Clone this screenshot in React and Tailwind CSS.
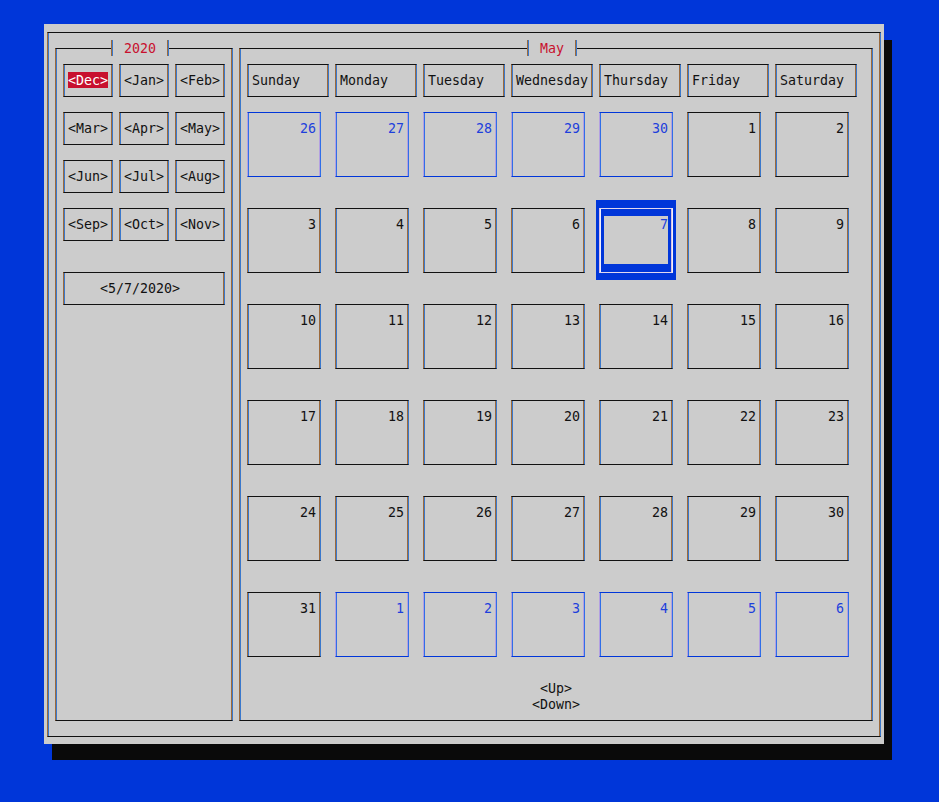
import React from "react";

const BOX =
  "border-y border-y-[#111111] border-l border-l-[#9c6a3c] border-r border-r-[#3a78cc] shadow-[inset_1px_0_0_#3a78cc,inset_-1px_0_0_#9c6a3c]";
const BLUEBOX =
  "border-y border-y-[#0036d9] border-l border-l-[#b4a0e0] border-r border-r-[#2f6ee8] shadow-[inset_1px_0_0_#2f6ee8,inset_-1px_0_0_#b4a0e0]";
const SELBOX =
  "border-y border-y-[#e2d8ee] border-l border-l-[#d8c0e4] border-r border-r-[#f2f0fa] bg-[#0036d9] shadow-[0_-5px_0_3px_#0036d9,0_4px_0_3px_#0036d9,inset_1px_0_0_#f2f0fa,inset_-1px_0_0_#d8c0e4]";
const TITLE =
  "absolute top-[-9px] h-[16px] pt-[1px] bg-[#cccccc] border-l border-l-[#9c6a3c] border-r border-r-[#3a78cc] shadow-[inset_1px_0_0_#3a78cc,inset_-1px_0_0_#9c6a3c] text-center text-[#c8102e]";

const months = ["Dec", "Jan", "Feb", "Mar", "Apr", "May", "Jun", "Jul", "Aug", "Sep", "Oct", "Nov"];
const days = ["Sunday", "Monday", "Tuesday", "Wednesday", "Thursday", "Friday", "Saturday"];

const cells = [];
[26, 27, 28, 29, 30].forEach((d) => cells.push({ d, other: true }));
for (let d = 1; d <= 31; d++) cells.push({ d, other: false });
[1, 2, 3, 4, 5, 6].forEach((d) => cells.push({ d, other: true }));

function Cell({ d, other }) {
  if (!other && d === 7) {
    return (
      <div className={`w-[74px] h-[65px] px-[4px] pt-[7px] ${SELBOX}`}>
        <div className="w-[64px] h-[48px] pt-[1px] bg-[#cccccc] text-right text-[#1d3fdc]">{d}</div>
      </div>
    );
  }
  return (
    <div
      className={`w-[74px] h-[65px] pt-[8px] pr-[4px] text-right ${
        other ? `${BLUEBOX} text-[#1d3fdc]` : BOX
      }`}
    >
      {d}
    </div>
  );
}

export default function App() {
  return (
    <div className="w-[939px] h-[802px] bg-[#0036d9] pl-[44px] pt-[24px] font-['DejaVu_Sans_Mono',monospace] text-[13.3px] leading-[16px] text-[#111111]">
      <div className="w-[840px] h-[720px] bg-[#cccccc] shadow-[8px_16px_0_0_#0a0a0a] pl-[3px] pt-[8px]">
        <div className={`w-[834px] h-[705px] pl-[7px] pt-[15px] flex gap-[6px] ${BOX}`}>
          {/* Left panel */}
          <div className={`relative w-[178px] h-[673px] pl-[7px] pt-[15px] ${BOX}`}>
            <div className={`${TITLE} left-[55px] w-[58px]`}>2020</div>
            <div className="grid grid-cols-[50px_50px_50px] gap-x-[6px] gap-y-[15px]">
              {months.map((m, i) => (
                <div key={m} className={`w-[50px] h-[33px] pt-[7px] flex justify-center ${BOX}`}>
                  {i === 0 ? (
                    <span className="block h-[16px] pt-[1px] leading-[16px] bg-[#c8102e] text-white">{`<${m}>`}</span>
                  ) : (
                    <span className="block h-[16px] pt-[1px] leading-[16px]">{`<${m}>`}</span>
                  )}
                </div>
              ))}
            </div>
            <div className={`mt-[31px] w-[162px] h-[33px] pt-[8px] pl-[36px] ${BOX}`}>&lt;5/7/2020&gt;</div>
          </div>

          {/* Right panel */}
          <div className={`relative w-[634px] h-[673px] pl-[7px] pt-[15px] ${BOX}`}>
            <div className={`${TITLE} left-[287px] w-[50px]`}>May</div>
            <div className="flex gap-[6px]">
              {days.map((d) => (
                <div key={d} className={`w-[82px] h-[33px] pl-[4px] pt-[8px] ${BOX}`}>
                  {d}
                </div>
              ))}
            </div>
            <div className="mt-[15px] grid grid-cols-[repeat(7,74px)] gap-x-[14px] gap-y-[31px]">
              {cells.map((c, i) => (
                <Cell key={i} d={c.d} other={c.other} />
              ))}
            </div>
            <div className="mt-[24px] -ml-[7px] w-[632px] flex flex-col items-center">
              <span>&lt;Up&gt;</span>
              <span>&lt;Down&gt;</span>
            </div>
          </div>
        </div>
      </div>
    </div>
  );
}
